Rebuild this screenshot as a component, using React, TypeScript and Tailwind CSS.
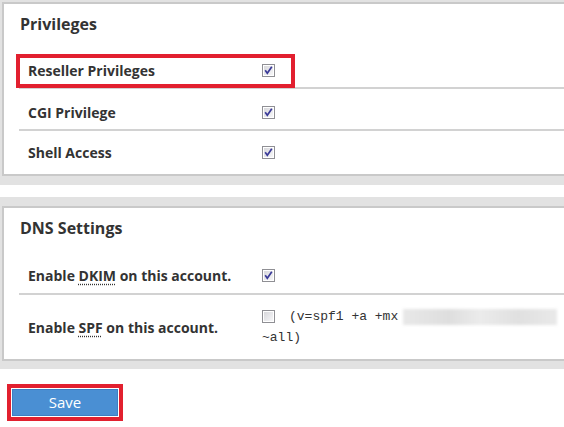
import React from "react";

const Check = ({ checked }: { checked: boolean }) => (
  <svg width="13" height="13" viewBox="0 0 13 13" className="block shrink-0">
    <defs>
      <linearGradient id="cbg" x1="0" y1="0" x2="1" y2="1">
        <stop offset="0" stopColor="#d8d8dc" />
        <stop offset="1" stopColor="#f6f6f8" />
      </linearGradient>
    </defs>
    <rect x="0.5" y="0.5" width="12" height="12" fill="#fff" stroke="#8f8f94" />
    <rect x="2" y="2" width="9" height="9" fill="url(#cbg)" />
    {checked && (
      <path d="M3.2 6.3 L5.3 9.2 L9.8 2.8" fill="none" stroke="#3a3a98" strokeWidth="1.7" />
    )}
  </svg>
);

const Row = ({
  label,
  children,
  last,
  className = "",
}: {
  label: React.ReactNode;
  children: React.ReactNode;
  last?: boolean;
  className?: string;
}) => (
  <div
    className={`flex items-center ${last ? "" : "border-b-2 border-[#d2d2d2]"} ${className}`}
  >
    <div className="w-[243px] shrink-0 pl-[9px] text-[14px] font-bold text-[#333]">{label}</div>
    <div className="flex-1">{children}</div>
  </div>
);

const Abbr = ({ children }: { children: React.ReactNode }) => (
  <span className="underline decoration-[#333] decoration-dotted underline-offset-[3px]">{children}</span>
);

export default function App() {
  return (
    <div
      className="min-h-[427px] w-[564px] overflow-hidden bg-white"
      style={{ fontFamily: '"Open Sans", "Noto Sans", sans-serif' }}
    >
      {/* Privileges */}
      <div className="bg-[#e2e2e2] pb-[9px] pl-[2px] pt-[2px]">
        <div className="relative border-2 border-r-0 border-[#c9c9c9] bg-white">
          <div className="h-[43px] pl-4 pt-2 text-[16px] font-bold leading-6 text-[#333]">Privileges</div>
          <div className="ml-[15px]">
            <Row label="Reseller Privileges" className="relative h-[42px] pt-[7px]">
              <Check checked />
              <div className="pointer-events-none absolute left-[-3px] top-[7px] h-[34px] w-[279px] border-4 border-[#e2202f]" />
            </Row>
            <Row label="CGI Privilege" className="h-[42px] pt-[6px]">
              <Check checked />
            </Row>
            <Row label="Shell Access" last className="h-[43px]">
              <Check checked />
            </Row>
          </div>
        </div>
      </div>

      {/* DNS Settings */}
      <div className="mt-3 bg-[#e2e2e2] pb-[8px] pl-[2px] pt-[9px]">
        <div className="border-2 border-r-0 border-[#c9c9c9] bg-white">
          <div className="h-[46px] pl-4 pt-2 text-[16px] font-bold leading-6 text-[#333]">DNS Settings</div>
          <div className="ml-[15px]">
            <Row
              label={
                <>
                  Enable <Abbr>DKIM</Abbr> on this account.
                </>
              }
              className="h-[41px] pt-[3px]"
            >
              <Check checked />
            </Row>
            <Row
              label={
                <>
                  Enable <Abbr>SPF</Abbr> on this account.
                </>
              }
              last
              className="h-[64px]"
            >
              <div
                className="text-[13px] leading-[21px] text-[#333]"
                style={{ fontFamily: '"Liberation Mono", monospace' }}
              >
                <div className="flex items-center">
                  <Check checked={false} />
                  <span className="ml-[14px] whitespace-pre">(v=spf1 +a +mx</span>
                  <span className="ml-[5px] inline-block h-[16px] w-[154px] bg-[linear-gradient(90deg,#e8e8e8,#dedede_30%,#ebebeb_50%,#e0e0e0_75%,#e9e9e9)] blur-[1.5px]" />
                </div>
                <div>~all)</div>
              </div>
            </Row>
          </div>
        </div>
      </div>

      {/* Save */}
      <div className="pl-[7px] pt-[15px]">
        <div className="inline-block border-4 border-[#e2202f] p-px">
          <button className="block h-[27px] w-[106px] border border-[#3d7ec2] bg-[#4a8fd3] text-[15px] leading-none text-white">
            Save
          </button>
        </div>
      </div>
    </div>
  );
}
